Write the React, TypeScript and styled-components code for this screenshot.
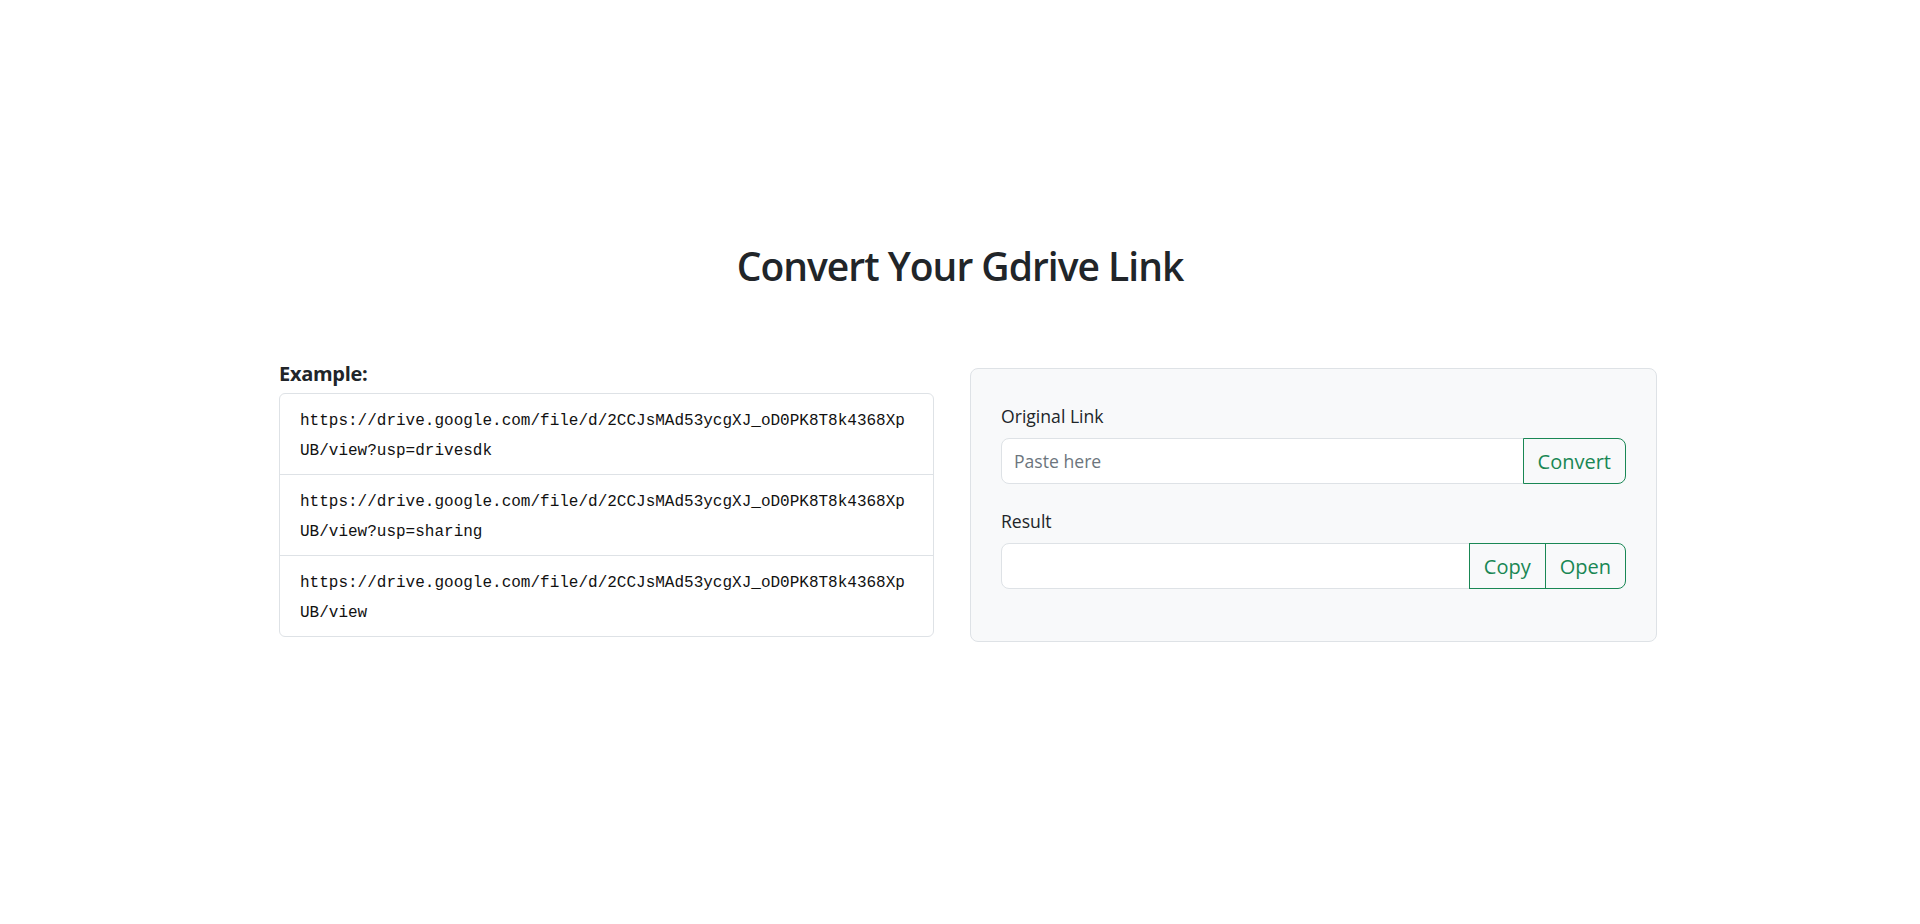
import React from "react";
import styled, { createGlobalStyle } from "styled-components";

const GlobalStyle = createGlobalStyle`
    * {
        box-sizing: border-box;
    }
    body {
        margin: 0;
        background: #fff;
        color: #212529;
        font-family: "Open Sans", "Noto Sans", sans-serif;
    }
`;

export const Page = styled.main`
    padding-top: 242px;
`;

export const Title = styled.h1`
    margin: 0;
    text-align: center;
    font-size: 39px;
    font-weight: 600;
    line-height: 48px;
    letter-spacing: -1px;
    color: #212529;
`;

export const Container = styled.div`
    width: 1394px;
    margin: 72px auto 0;
    padding-left: 16px;
    display: grid;
    grid-template-columns: 655px 687px;
    column-gap: 36px;
    align-items: start;
`;

export const ExampleLabel = styled.div`
    font-size: 20px;
    font-weight: 700;
    line-height: 24px;
    letter-spacing: -0.3px;
    margin-bottom: 7px;
`;

export const LinkList = styled.ul`
    list-style: none;
    margin: 0;
    padding: 0;
    border: 1px solid #dee2e6;
    border-radius: 6px;
    background: #fff;
`;

export const LinkItem = styled.li`
    padding: 12px 20px 8px;
    font-family: "Liberation Mono", "DejaVu Sans Mono", monospace;
    font-size: 16px;
    line-height: 30px;
    color: #111;
    word-break: break-all;
    & + & {
        border-top: 1px solid #dee2e6;
    }
`;

export const Card = styled.form`
    margin-top: 6px;
    background: #f8f9fa;
    border: 1px solid #dee2e6;
    border-radius: 8px;
    padding: 34px 30px 28px;
`;

export const Field = styled.div`
    margin-bottom: 24px;
`;

export const Label = styled.label`
    display: block;
    font-size: 17.6px;
    line-height: 26px;
    margin-bottom: 9px;
    color: #212529;
`;

export const InputGroup = styled.div`
    display: flex;
    height: 46px;
`;

export const TextInput = styled.input`
    flex: 1;
    min-width: 0;
    height: 100%;
    padding: 0 12px;
    font-family: inherit;
    font-size: 17.6px;
    color: #212529;
    background: #fff;
    border: 1px solid #dee2e6;
    border-radius: 8px 0 0 8px;
    outline: none;
    &::placeholder {
        color: #6c757d;
    }
`;

export const GroupButton = styled.button<{ $last?: boolean }>`
    height: 100%;
    margin-left: -1px;
    padding: 0 14px;
    font-family: inherit;
    font-size: 20px;
    color: #198754;
    background: transparent;
    border: 1px solid #198754;
    border-radius: ${(p) => (p.$last ? "0 8px 8px 0" : "0")};
    cursor: pointer;
`;

const examples = [
    "https://drive.google.com/file/d/2CCJsMAd53ycgXJ_oD0PK8T8k4368XpUB/view?usp=drivesdk",
    "https://drive.google.com/file/d/2CCJsMAd53ycgXJ_oD0PK8T8k4368XpUB/view?usp=sharing",
    "https://drive.google.com/file/d/2CCJsMAd53ycgXJ_oD0PK8T8k4368XpUB/view",
];

const App = () => {
    return (
        <Page>
            <GlobalStyle />
            <Title>Convert Your Gdrive Link</Title>
            <Container>
                <div>
                    <ExampleLabel>Example:</ExampleLabel>
                    <LinkList>
                        {examples.map((link) => (
                            <LinkItem key={link}>{link}</LinkItem>
                        ))}
                    </LinkList>
                </div>
                <Card onSubmit={(e) => e.preventDefault()}>
                    <Field>
                        <Label htmlFor="original">Original Link</Label>
                        <InputGroup>
                            <TextInput id="original" placeholder="Paste here" />
                            <GroupButton type="submit" $last>
                                Convert
                            </GroupButton>
                        </InputGroup>
                    </Field>
                    <Field>
                        <Label htmlFor="result">Result</Label>
                        <InputGroup>
                            <TextInput id="result" readOnly />
                            <GroupButton type="button">Copy</GroupButton>
                            <GroupButton type="button" $last>
                                Open
                            </GroupButton>
                        </InputGroup>
                    </Field>
                </Card>
            </Container>
        </Page>
    );
};

export default App;
